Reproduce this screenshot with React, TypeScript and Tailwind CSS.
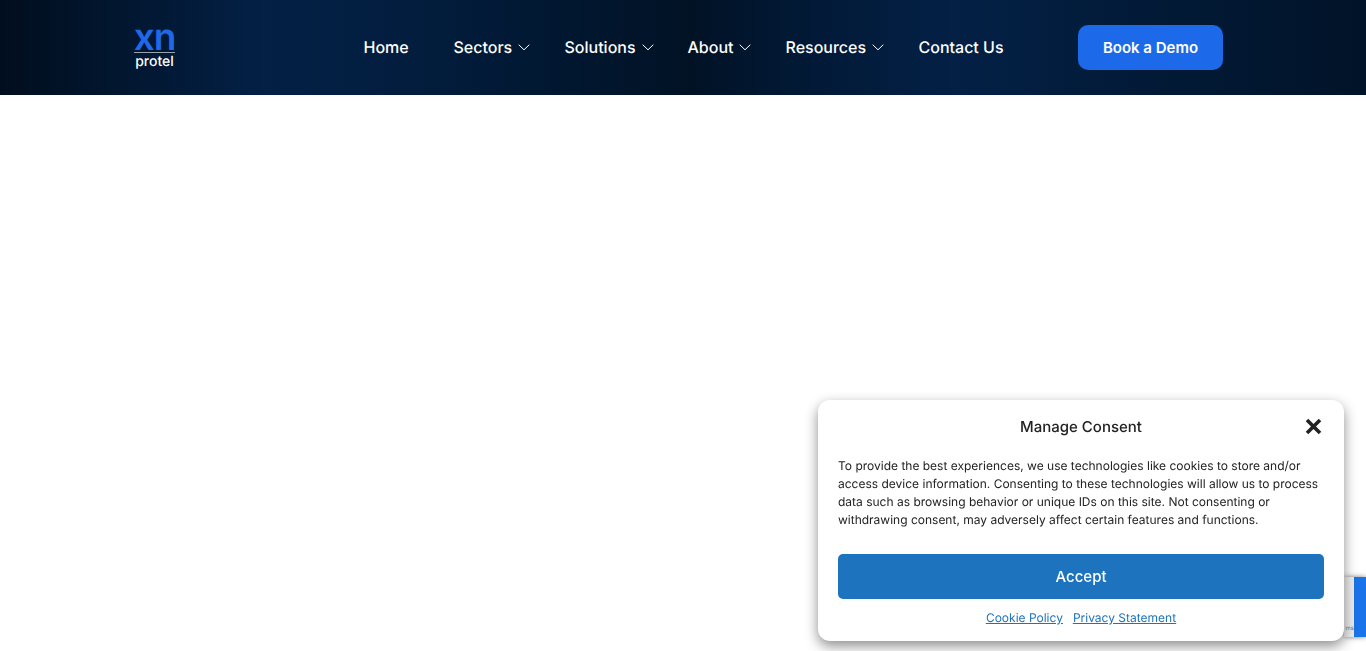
import React from "react";

function Chevron() {
  return (
    <svg width="12" height="7" viewBox="0 0 12 7" fill="none" stroke="#ffffff" strokeWidth="1" className="ml-[6px] mt-[1px]">
      <path d="M0.7 0.7 L6 5.8 L11.3 0.7" />
    </svg>
  );
}

function NavItem({ label, chevron, className }: { label: string; chevron?: boolean; className: string }) {
  return (
    <a className={`flex items-center text-white text-[16px] font-medium leading-[24px] ${className}`}>
      {label}
      {chevron && <Chevron />}
    </a>
  );
}

export default function App() {
  return (
    <div className="min-h-[651px] bg-white font-['Inter',sans-serif] overflow-hidden [text-rendering:geometricPrecision]">
      <header className="h-[95px] flex items-center pl-[134px] bg-[linear-gradient(90deg,#010e1f_0%,#010f20_1%,#032045_19.5%,#021d3e_30%,#011225_50.5%,#021a38_60%,#032045_70%,#011328_100%)]">
        <div className="w-[41px] h-[44px] flex flex-col items-center mt-[-1px]">
          <span className="text-[#1f69e8] text-[37px] font-semibold leading-[24px] h-[24px] tracking-[-1px]">xn</span>
          <div className="w-[41px] h-px bg-[#9aa3ad] mt-[3px]" />
          <span className="text-white text-[14px] font-medium leading-[15px] mt-px">protel</span>
        </div>
        <nav className="flex items-center ml-[188.5px] mt-[-2px]">
          <NavItem label="Home" className="w-[90px]" />
          <NavItem label="Sectors" chevron className="w-[111px]" />
          <NavItem label="Solutions" chevron className="w-[123px]" />
          <NavItem label="About" chevron className="w-[98px]" />
          <NavItem label="Resources" chevron className="w-[133px]" />
          <NavItem label="Contact Us" className="w-[159.5px]" />
        </nav>
        <button className="w-[145px] h-[45px] pt-px rounded-[10px] bg-[#1c69ea] text-white text-[15px] font-semibold">Book a Demo</button>
      </header>

      <div className="fixed right-0 bottom-[14px] w-[22px] h-[60px] flex shadow-[0_0_5px_rgba(0,0,0,0.5)]">
        <div className="w-[10px] bg-[#ececec] flex items-end justify-end">
          <span className="text-[6px] leading-[12px] mb-[2px] text-[#777777] whitespace-nowrap">ms</span>
        </div>
        <div className="w-[12px] bg-[#1a73e8]" />
      </div>

      <div className="fixed left-[818px] top-[400px] w-[526px] h-[241px] rounded-[12px] bg-white shadow-[0_5px_13px_rgba(0,0,0,0.45)] px-[20px] pt-[17px] text-[#222222]">
        <div className="relative h-[20px] flex justify-center">
          <span className="text-[15px] font-medium leading-[20px]">Manage Consent</span>
          <svg className="absolute right-[2px] top-[0.5px]" width="17" height="17" viewBox="0 0 17 17" fill="none" stroke="#222222" strokeWidth="3.6">
            <path d="M2 2 L15 15 M15 2 L2 15" />
          </svg>
        </div>
        <p className="mt-[20px] text-[12px] leading-[18px] text-[#222222]">
          To provide the best experiences, we use technologies like cookies to store and/or access device information. Consenting to these technologies will allow us to process data such as browsing behavior or unique IDs on this site. Not consenting or withdrawing consent, may adversely affect certain features and functions.
        </p>
        <button className="mt-[25px] w-full h-[45px] pt-px rounded-[5px] bg-[#1e73be] text-white text-[15px] font-medium">Accept</button>
        <div className="mt-[10px] flex justify-center gap-[10px] text-[12px] leading-[18px] text-[#1e73be] underline">
          <a>Cookie Policy</a>
          <a>Privacy Statement</a>
        </div>
      </div>
    </div>
  );
}
